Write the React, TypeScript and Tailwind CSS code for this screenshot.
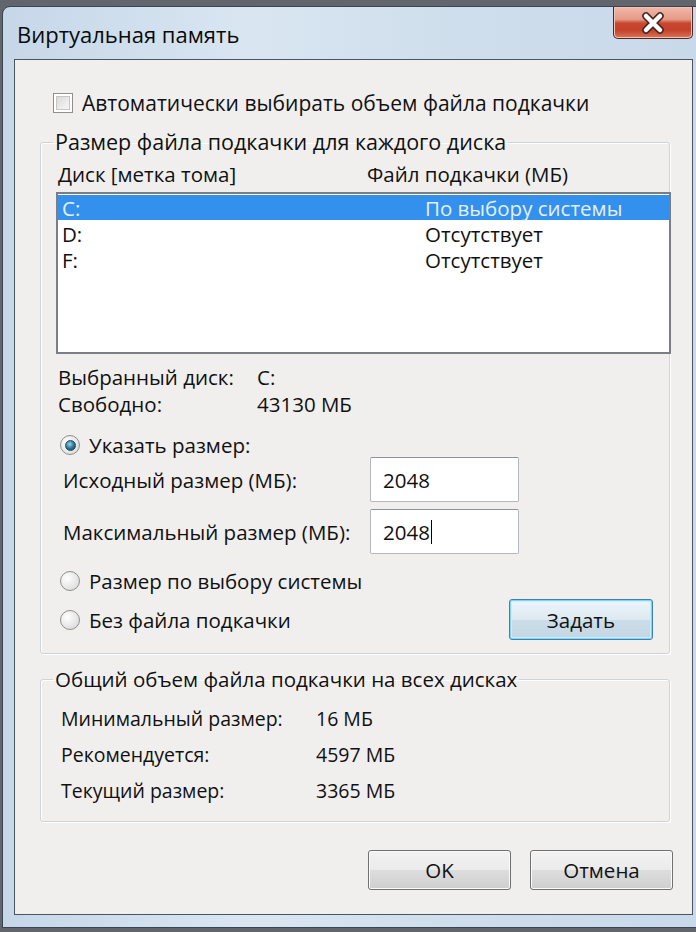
import React from 'react'

const font = "font-['Open_Sans',sans-serif]"

function Checkbox() {
  return (
    <span className="w-[20px] h-[20px] border border-[#8f8f8f] bg-white p-[2px] flex-shrink-0">
      <span className="block w-full h-full border border-[#c6c6c6] bg-[linear-gradient(135deg,#d9d9d9,#f7f7f7)]" />
    </span>
  )
}

function Radio({ checked }: { checked?: boolean }) {
  return (
    <span className="w-[20px] h-[20px] rounded-full border border-[#8e8f8f] bg-[radial-gradient(circle_at_35%_35%,#ffffff,#d4d4d4)] flex items-center justify-center flex-shrink-0">
      {checked && (
        <span className="w-[11px] h-[11px] rounded-full bg-[radial-gradient(circle_at_40%_35%,#9ad3ea,#2b6f8f_55%,#153f57)] border border-[#1d4a63]" />
      )}
    </span>
  )
}

function Button({ children, focused, className }: { children: React.ReactNode; focused?: boolean; className?: string }) {
  return (
    <div
      className={
        'flex items-center justify-center rounded-[3px] border text-[20.5px] text-[#111] ' +
        (focused
          ? 'border-[#3b83ad] bg-[linear-gradient(#edf5fa_0%,#dde9f1_50%,#ccdde9_51%,#c3d6e4_100%)] shadow-[inset_0_0_0_1px_#7fd6f7,inset_0_0_0_2px_#c8eefc] '
          : 'border-[#707070] bg-[linear-gradient(#f2f2f2_0%,#ebebeb_50%,#dddddd_51%,#cfcfcf_100%)] shadow-[inset_0_0_0_1px_#fbfbfb] ') +
        (className ?? '')
      }
    >
      {children}
    </div>
  )
}

function Field({ value, caret }: { value: string; caret?: boolean }) {
  return (
    <div className="w-[149px] h-[45px] border border-[#b5b8bd] border-t-[#8d9198] rounded-[2px] bg-white flex items-center pl-[12px] text-[20.5px] text-[#111]">
      {value}
      {caret && <span className="w-px h-[24px] bg-black ml-[1px]" />}
    </div>
  )
}

export default function App() {
  return (
    <div className={`w-[696px] h-[932px] overflow-hidden bg-[#62666c] pt-[6px] ${font}`}>
      <div className="ml-[2px] w-[703px] h-[922px] rounded-t-[8px] border border-[#3a4553] bg-[linear-gradient(90deg,#c6d7e8_0%,#d9e6f2_35%,#cfdeec_65%,#c8d9ea_100%)] px-[11px] flex flex-col">
        <div className="h-[52px] flex justify-between">
          <div className="ml-[3px] mt-[12px] text-[22px] leading-[30px] text-[#0a0a0a]">Виртуальная память</div>
          <div className="w-[80px] h-[32px] rounded-b-[5px] border border-t-0 border-[#4a2a24] bg-[linear-gradient(#f0b8aa_0%,#e49a88_40%,#c9472f_52%,#c4422c_75%,#dc7358_100%)] flex items-center justify-center shadow-[inset_0_0_0_1px_#f2c4b8]">
            <svg width="24" height="22" viewBox="0 0 24 22">
              <path d="M5 4 L19 18 M19 4 L5 18" stroke="#4b2620" strokeWidth="7.5" strokeLinecap="round" />
              <path d="M5 4 L19 18 M19 4 L5 18" stroke="#ffffff" strokeWidth="4.5" strokeLinecap="round" />
            </svg>
          </div>
        </div>

        <div className="h-[856px] border border-[#4a5562] bg-[#f0efee] text-[20.5px] leading-[24px] text-[#111]">
          <div className="ml-[38px] mt-[31px] h-[24px] flex items-center gap-[9px]">
            <Checkbox />
            <span className="text-[21px]">Автоматически выбирать объем файла подкачки</span>
          </div>

          <fieldset className="ml-[25px] mt-[15px] w-[630px] min-w-0 rounded-[3px] border border-[#d0d4d8] shadow-[inset_1px_1px_0_#ffffff,1px_1px_0_#ffffff]">
            <legend className="ml-[12px] px-[2px] leading-[24px] text-[21.5px]">Размер файла подкачки для каждого диска</legend>
            <div className="pl-[15px] pr-[16px] pt-[8px] pb-[13px]">
              <div className="h-[24px] pl-[2px] grid grid-cols-[309px_1fr] items-center">
                <span>Диск [метка тома]</span>
                <span>Файл подкачки (МБ)</span>
              </div>
              <div className="mt-[6px] w-[615px] h-[162px] border-2 border-[#7b7e83] bg-white pt-[1px]">
                <div className="h-[25px] pl-[4px] grid grid-cols-[363px_1fr] items-center bg-[#3390ec] text-[#e3f0ff]">
                  <span>C:</span>
                  <span>По выбору системы</span>
                </div>
                <div className="h-[27px] pl-[4px] grid grid-cols-[363px_1fr] items-center">
                  <span>D:</span>
                  <span>Отсутствует</span>
                </div>
                <div className="h-[26px] pl-[4px] grid grid-cols-[363px_1fr] items-center">
                  <span>F:</span>
                  <span>Отсутствует</span>
                </div>
              </div>

              <div className="mt-[9px] pl-[2px]">
                <div className="h-[27px] grid grid-cols-[199px_1fr] items-center">
                  <span>Выбранный диск:</span>
                  <span>C:</span>
                </div>
                <div className="h-[27px] grid grid-cols-[199px_1fr] items-center">
                  <span>Свободно:</span>
                  <span>43130 МБ</span>
                </div>
              </div>

              <div className="mt-[16px] h-[24px] pl-[4px] flex items-center gap-[9px]">
                <Radio checked />
                <span>Указать размер:</span>
              </div>
              <div className="h-[45px] flex items-center">
                <span className="w-[314px] pl-[7px]">Исходный размер (МБ):</span>
                <Field value="2048" />
              </div>
              <div className="mt-[7px] h-[45px] flex items-center">
                <span className="w-[314px] pl-[7px]">Максимальный размер (МБ):</span>
                <Field value="2048" caret />
              </div>
              <div className="mt-[15px] h-[24px] pl-[4px] flex items-center gap-[9px]">
                <Radio />
                <span>Размер по выбору системы</span>
              </div>
              <div className="mt-[6px] h-[41px] flex items-center justify-between">
                <div className="pl-[4px] flex items-center gap-[9px]">
                  <Radio />
                  <span>Без файла подкачки</span>
                </div>
                <Button focused className="w-[144px] h-[41px]">Задать</Button>
              </div>
            </div>
          </fieldset>

          <fieldset className="ml-[25px] mt-[13px] w-[630px] min-w-0 rounded-[3px] border border-[#d0d4d8] shadow-[inset_1px_1px_0_#ffffff,1px_1px_0_#ffffff]">
            <legend className="ml-[12px] px-[2px] leading-[24px]">Общий объем файла подкачки на всех дисках</legend>
            <div className="pl-[20px] pt-[10px] pb-[12px] text-[19.5px]">
              <div className="h-[36px] grid grid-cols-[255px_1fr] items-center">
                <span>Минимальный размер:</span>
                <span>16 МБ</span>
              </div>
              <div className="h-[36px] grid grid-cols-[255px_1fr] items-center">
                <span>Рекомендуется:</span>
                <span>4597 МБ</span>
              </div>
              <div className="h-[36px] grid grid-cols-[255px_1fr] items-center">
                <span>Текущий размер:</span>
                <span>3365 МБ</span>
              </div>
            </div>
          </fieldset>

          <div className="mt-[28px] pr-[19px] flex justify-end gap-[19px]">
            <Button className="w-[143px] h-[40px]">OK</Button>
            <Button className="w-[143px] h-[40px]">Отмена</Button>
          </div>
        </div>
      </div>
    </div>
  )
}
